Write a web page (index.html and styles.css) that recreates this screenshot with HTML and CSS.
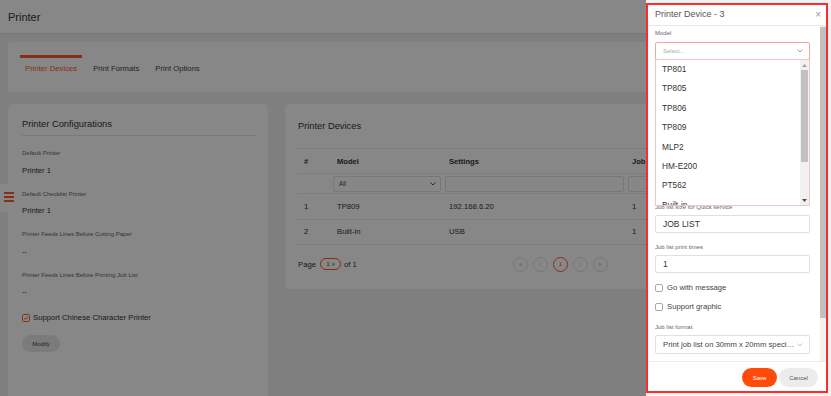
FILE: index.html
```html
<!DOCTYPE html>
<html lang="en">
<head>
  <meta charset="UTF-8">
  <meta name="viewport" content="width=device-width, initial-scale=1.0">
  <title>Printer</title>
  <link rel="stylesheet" href="styles.css">
</head>
<body>
  <header class="page-head">Printer</header>

  <nav class="tabs-card">
    <div class="tab active">Printer Devices</div>
    <div class="tab">Print Formats</div>
    <div class="tab">Print Options</div>
  </nav>

  <main class="content">
    <section class="card config">
      <h2>Printer Configurations</h2>
      <div class="field">
        <div class="label">Default Printer</div>
        <div class="value">Printer 1</div>
      </div>
      <div class="field">
        <div class="label">Default Checklist Printer</div>
        <div class="value">Printer 1</div>
      </div>
      <div class="field">
        <div class="label">Printer Feeds Lines Before Cutting Paper</div>
        <div class="value">--</div>
      </div>
      <div class="field">
        <div class="label">Printer Feeds Lines Before Printing Job List</div>
        <div class="value">--</div>
      </div>
      <div class="check-row">
        <span class="box checked">
          <svg width="6" height="6" viewBox="0 0 6 6"><path d="M1 3.1 L2.5 4.5 L5 1.5" fill="none" stroke="#ff5a2a" stroke-width="1"/></svg>
        </span>
        Support Chinese Character Printer
      </div>
      <button class="btn-modify">Modify</button>
    </section>

    <section class="card devices">
      <h2>Printer Devices</h2>
      <table>
        <thead>
          <tr>
            <th class="c-num">#</th>
            <th class="c-model">Model</th>
            <th class="c-set">Settings</th>
            <th>Job List</th>
            <th>Action</th>
          </tr>
          <tr class="filters">
            <td></td>
            <td>
              <div class="f-select">All
                <svg width="6" height="4" viewBox="0 0 6 4"><path d="M0.5 0.5 L3 3 L5.5 0.5" fill="none" stroke="#555" stroke-width="1"/></svg>
              </div>
            </td>
            <td><div class="f-input"></div></td>
            <td><div class="f-input"></div></td>
            <td></td>
          </tr>
        </thead>
        <tbody>
          <tr><td>1</td><td>TP809</td><td>192.168.6.20</td><td>1</td><td></td></tr>
          <tr><td>2</td><td>Built-in</td><td>USB</td><td>1</td><td></td></tr>
        </tbody>
      </table>
      <div class="pager">
        <div class="info">Page <span class="page-pill">1 <small>&#9662;</small></span> of 1</div>
        <div class="pages">
          <span class="pbtn"><svg width="5" height="5" viewBox="0 0 5 5"><path d="M4 0.5 L1 2.5 L4 4.5 Z" fill="#d0d0d0"/></svg></span>
          <span class="pbtn"><svg width="5" height="5" viewBox="0 0 5 5"><path d="M3.5 0.5 L1.5 2.5 L3.5 4.5" fill="none" stroke="#d0d0d0" stroke-width="0.8"/></svg></span>
          <span class="pbtn current">1</span>
          <span class="pbtn"><svg width="5" height="5" viewBox="0 0 5 5"><path d="M1.5 0.5 L3.5 2.5 L1.5 4.5" fill="none" stroke="#d0d0d0" stroke-width="0.8"/></svg></span>
          <span class="pbtn"><svg width="5" height="5" viewBox="0 0 5 5"><path d="M1 0.5 L4 2.5 L1 4.5 Z" fill="#d0d0d0"/></svg></span>
        </div>
      </div>
    </section>
  </main>

  <div class="side-toggle"><span></span><span></span><span></span></div>

  <div class="mask"></div>

  <aside class="drawer">
    <div class="panel">
      <div class="d-head">
        <span class="d-title">Printer Device - 3</span>
        <span class="d-close">&times;</span>
      </div>
      <div class="d-body">
        <div class="d-form">
          <div class="d-label">Model</div>
          <div class="sel-wrap">
            <div class="d-select open">
              <span class="ph">Select...</span>
              <svg width="6" height="4" viewBox="0 0 6 4"><path d="M0.5 0.5 L3 3 L5.5 0.5" fill="none" stroke="#999" stroke-width="0.9"/></svg>
            </div>
            <div class="menu">
              <div class="opts">
                <div class="opt">TP801</div>
                <div class="opt">TP805</div>
                <div class="opt">TP806</div>
                <div class="opt">TP809</div>
                <div class="opt">MLP2</div>
                <div class="opt">HM-E200</div>
                <div class="opt">PT562</div>
                <div class="opt">Built-in</div>
              </div>
              <div class="m-scroll">
                <div class="arrow"><svg width="5" height="3" viewBox="0 0 5 3"><path d="M0 3 L2.5 0 L5 3 Z" fill="#a3a3a3"/></svg></div>
                <div class="m-thumb"></div>
                <div class="m-fill"></div>
                <div class="arrow"><svg width="5" height="3" viewBox="0 0 5 3"><path d="M0 0 L2.5 3 L5 0 Z" fill="#505050"/></svg></div>
              </div>
            </div>
          </div>

          <div class="d-label gap-menu">Job list size for Quick service</div>
          <div class="d-input">JOB LIST</div>

          <div class="d-label gap">Job list print times</div>
          <div class="d-input">1</div>

          <div class="d-check first"><span class="box"></span>Go with message</div>
          <div class="d-check"><span class="box"></span>Support graphic</div>

          <div class="d-label gap-fmt">Job list format</div>
          <div class="d-select fmt">
            <span class="fmt-text">Print job list on 30mm x 20mm special paper</span>
            <svg width="6" height="4" viewBox="0 0 6 4"><path d="M0.5 0.5 L3 3 L5.5 0.5" fill="none" stroke="#bbb" stroke-width="0.9"/></svg>
          </div>
        </div>
        <div class="v-scroll"><div class="v-thumb"></div></div>
      </div>
      <div class="d-foot">
        <button class="btn-save">Save</button>
        <button class="btn-cancel">Cancel</button>
      </div>
    </div>
  </aside>
</body>
</html>
```

FILE: styles.css
```css
* {
  box-sizing: border-box;
}
body {
  margin: 0;
  width: 831px;
  height: 396px;
  overflow: hidden;
  font-family: "Liberation Sans", Arial, sans-serif;
  background: #f0f0f0;
  color: #333;
}
.page-head {
  height: 34px;
  padding: 3px 0 0 8px;
  background: #fff;
  border-bottom: 1px solid #e2e2e2;
  font-size: 11px;
  line-height: 28px;
  color: #333;
}
.tabs-card {
  display: flex;
  gap: 6px;
  height: 50px;
  margin: 8px 8px 0;
  padding: 13px 12px 0;
  background: #fff;
  border-radius: 4px;
}
.tab {
  padding: 7px 5px 0;
  border-top: 3px solid transparent;
  font-size: 7.7px;
  line-height: 8px;
  color: #444;
}
.tab.active {
  border-top-color: #ff5a2a;
  color: #ff5a2a;
}
.content {
  display: grid;
  grid-template-columns: 260px 1fr;
  gap: 17px;
  padding: 12px 8px 0;
  align-items: start;
}
.card {
  background: #fff;
  border-radius: 5px;
}
.card h2 {
  margin: 0;
  font-size: 9.3px;
  font-weight: normal;
  line-height: 12px;
  color: #333;
}
.config {
  padding: 14px 12px 70px 14px;
}
.config h2 {
  padding-bottom: 5px;
  border-bottom: 1px solid #e4e4e4;
}
.field {
  padding-top: 14px;
}
.field:first-of-type {
  padding-top: 13px;
}
.field .label {
  font-size: 6px;
  line-height: 8px;
  color: #666;
}
.field .value {
  margin-top: 8.5px;
  font-size: 7.7px;
  line-height: 10px;
  color: #333;
}
.check-row {
  display: flex;
  align-items: center;
  margin-top: 16px;
  font-size: 7.7px;
  line-height: 10px;
  color: #333;
}
.box {
  display: inline-flex;
  align-items: center;
  justify-content: center;
  width: 8px;
  height: 8px;
  margin-right: 3px;
  border: 1px solid #999;
  border-radius: 1.5px;
  background: #fff;
}
.box.checked {
  border-color: #ff5a2a;
}
.btn-modify {
  display: block;
  width: 38px;
  height: 17px;
  margin-top: 12px;
  padding: 0;
  border: none;
  border-radius: 9px;
  background: #e8e8e8;
  font-family: inherit;
  font-size: 6px;
  color: #444;
}

/* printer devices table */
.devices {
  padding: 16px 13px 19px;
}
.devices h2 {
  margin-bottom: 16px;
}
table {
  width: 100%;
  border-collapse: collapse;
  border-top: 1px solid #ececec;
  table-layout: fixed;
}
th {
  height: 25px;
  padding: 0 6px;
  border-bottom: 1px solid #ececec;
  text-align: left;
  font-size: 7.6px;
  font-weight: bold;
  color: #333;
}
.c-num { width: 33px; }
.c-model { width: 112px; }
.c-set { width: 183px; }
.filters td {
  height: 20px;
  padding: 0 2px;
  border-bottom: 1px solid #ececec;
}
.f-select, .f-input {
  height: 16px;
  border: 1px solid #e2e2e2;
  border-radius: 2px;
  background: #fff;
}
.f-select {
  display: flex;
  align-items: center;
  justify-content: space-between;
  padding: 0 4px 0 5px;
  font-size: 6.3px;
  color: #444;
}
tbody td {
  height: 25.5px;
  padding: 0 6px;
  border-bottom: 1px solid #ececec;
  font-size: 7.7px;
  color: #333;
}
.pager {
  display: flex;
  align-items: center;
  height: 12px;
  margin-top: 13px;
  font-size: 7.7px;
  color: #333;
}
.pager .info {
  display: flex;
  align-items: center;
  width: 215px;
}
.page-pill {
  display: inline-flex;
  align-items: center;
  justify-content: center;
  gap: 2px;
  width: 21px;
  height: 12px;
  margin: 0 3px 0 4px;
  border: 1px solid #ff5a2a;
  border-radius: 7px;
  font-size: 5.5px;
  color: #333;
}
.page-pill small {
  font-size: 5px;
  color: #777;
}
.pages {
  display: flex;
  gap: 5px;
}
.pbtn {
  display: inline-flex;
  align-items: center;
  justify-content: center;
  width: 15px;
  height: 15px;
  border: 1px solid #e0e0e0;
  border-radius: 50%;
  font-size: 6px;
}
.pbtn.current {
  border-color: #ff5a2a;
  color: #ff5a2a;
}

.side-toggle {
  position: fixed;
  left: 0;
  top: 184px;
  display: flex;
  flex-direction: column;
  gap: 2.5px;
  width: 17px;
  height: 28px;
  padding: 8px 0 0 4px;
  background: #fff;
  border-radius: 0 4px 4px 0;
}
.side-toggle span {
  width: 10px;
  height: 1.5px;
  background: #ff5a2a;
}

.mask {
  position: fixed;
  inset: 0;
  background: rgba(0, 0, 0, 0.47);
}

/* drawer */
.drawer {
  position: fixed;
  top: 0;
  right: 0;
  bottom: 0;
  width: 185px;
  padding: 3px 3px 3px 0;
  background: #f2f2f2;
}
.panel {
  display: flex;
  flex-direction: column;
  height: 100%;
  border: 2px solid #ff2b2b;
  background: #fff;
}
.d-head {
  display: flex;
  justify-content: space-between;
  align-items: center;
  height: 21px;
  padding: 0 5px 2px 7px;
  border-bottom: 1px solid #e8e8e8;
}
.d-title {
  font-size: 9px;
  color: #555;
}
.d-close {
  font-size: 10px;
  color: #999;
}
.d-body {
  display: flex;
  height: 335px;
}
.d-form {
  flex: 1;
  padding: 3px 10px 0 7px;
  overflow: hidden;
}
.v-scroll {
  width: 6px;
  background: #f1f1f1;
}
.v-thumb {
  height: 291px;
  margin-top: 1px;
  background: #c1c1c1;
}
.d-label {
  font-size: 6px;
  line-height: 8px;
  color: #666;
}
.d-label.gap-menu { margin-top: 143px; }
.d-label.gap { margin-top: 10px; }
.d-label.gap-fmt { margin-top: 11px; }
.sel-wrap {
  position: relative;
  margin-top: 5px;
}
.d-select {
  display: flex;
  align-items: center;
  justify-content: space-between;
  height: 18px;
  padding: 0 6px 0 7px;
  border: 1px solid #e0e0e0;
  border-radius: 2px;
}
.d-select.open {
  border-color: #f4a3a3;
}
.ph {
  font-size: 6px;
  color: #aaa;
}
.menu {
  position: absolute;
  left: 0;
  right: 0;
  top: calc(100% - 1px);
  z-index: 2;
  display: flex;
  height: 147px;
  border: 1px solid #f6c3c3;
  background: #fff;
}
.opts {
  flex: 1;
  overflow: hidden;
}
.opt {
  height: 19.4px;
  padding-left: 6px;
  font-size: 8.3px;
  line-height: 19.4px;
  color: #333;
}
.m-scroll {
  display: flex;
  flex-direction: column;
  width: 9px;
  background: #f1f1f1;
}
.m-scroll .arrow {
  display: flex;
  align-items: center;
  justify-content: center;
  height: 10px;
}
.m-thumb {
  height: 92px;
  margin: 0 1px;
  background: #c1c1c1;
}
.m-fill {
  flex: 1;
}
.d-input {
  height: 18px;
  margin-top: 4px;
  padding-left: 7px;
  border: 1px solid #e0e0e0;
  border-radius: 2px;
  font-size: 8.5px;
  line-height: 16px;
  color: #333;
}
.d-check {
  display: flex;
  align-items: center;
  margin-top: 9px;
  font-size: 7.7px;
  line-height: 10px;
  color: #444;
}
.d-check.first {
  margin-top: 10px;
}
.d-check .box {
  margin-right: 4px;
  border-color: #aaa;
  border-radius: 2px;
}
.d-select.fmt {
  height: 19px;
  margin-top: 4px;
}
.fmt-text {
  width: 135px;
  overflow: hidden;
  white-space: nowrap;
  text-overflow: ellipsis;
  font-size: 7.7px;
  color: #444;
}
.d-foot {
  display: flex;
  justify-content: flex-end;
  gap: 2px;
  height: 30px;
  padding: 6px 8px 0;
  border-top: 1px solid #ececec;
}
.d-foot button {
  height: 19px;
  padding: 0;
  border: none;
  border-radius: 10px;
  font-family: inherit;
  font-size: 6px;
}
.btn-save {
  width: 35px;
  background: #ff4a0a;
  color: #fff;
}
.btn-cancel {
  width: 39px;
  background: #ececec;
  color: #555;
}
```
